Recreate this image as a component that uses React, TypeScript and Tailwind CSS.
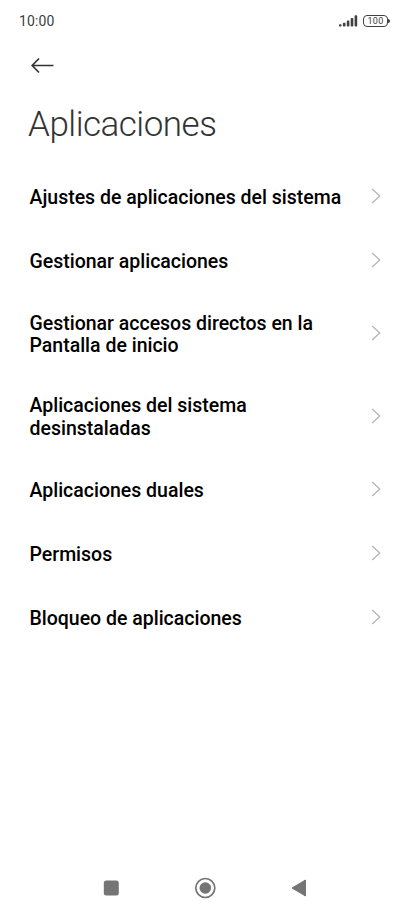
import React from 'react';

const items = [
  { label: 'Ajustes de aplicaciones del sistema', height: 'h-[64px]' },
  { label: 'Gestionar aplicaciones', height: 'h-[64px]' },
  {
    label: 'Gestionar accesos directos en la Pantalla de inicio',
    height: 'h-[82.5px]',
  },
  { label: 'Aplicaciones del sistema desinstaladas', height: 'h-[82.5px]' },
  { label: 'Aplicaciones duales', height: 'h-[64px]' },
  { label: 'Permisos', height: 'h-[64px]' },
  { label: 'Bloqueo de aplicaciones', height: 'h-[64px]' },
];

const StatusBar = () => {
  return (
    <div className="flex h-[42px] items-center justify-between pl-[19px] pr-[21px] text-[#404040]">
      <span className="text-[14px] font-[450] tracking-[0.1px]">10:00</span>
      <div className="flex items-center gap-[5px]">
        <svg width="19" height="12" viewBox="0 0 19 12" fill="currentColor">
          <rect x="0" y="9.2" width="2.6" height="2.4" rx="0.8" />
          <rect x="3.9" y="7.8" width="2.6" height="3.8" rx="0.8" />
          <rect x="7.8" y="5.6" width="2.6" height="6" rx="0.8" />
          <rect x="11.7" y="3" width="2.6" height="8.6" rx="0.8" />
          <rect x="15.6" y="0.2" width="2.6" height="11.4" rx="0.8" />
        </svg>
        <div className="flex items-center">
          <div className="flex h-[12px] w-[25px] items-center justify-center rounded-[4px] border border-[#404040] text-[9px] leading-none tracking-[0.2px]">
            100
          </div>
          <div className="h-[4px] w-[2px] rounded-r-full bg-[#404040]" />
        </div>
      </div>
    </div>
  );
};

const NavBar = () => {
  return (
    <div className="flex h-[52px] items-center justify-center pr-[1px] text-[#757575]">
      <svg width="206" height="24" viewBox="0 0 206 24" fill="currentColor">
        <rect x="1.8" y="4.5" width="15" height="15" rx="2.5" />
        <circle cx="103.3" cy="12" r="9.5" fill="none" stroke="currentColor" strokeWidth="1.7" />
        <circle cx="103.3" cy="12" r="5.8" />
        <path
          d="M190 12 L203.5 4 V20 Z"
          stroke="currentColor"
          strokeWidth="1"
          strokeLinejoin="round"
        />
      </svg>
    </div>
  );
};

const App = () => {
  return (
    <div className="flex h-[914px] w-[411px] flex-col bg-white font-[Roboto,sans-serif]">
      <StatusBar />
      <div className="flex h-[48px] items-center pl-[30px]">
        <svg width="24" height="18" viewBox="0 0 24 18" fill="none" stroke="#333" strokeWidth="1.7">
          <path d="M9 1.5 L2.2 8.5 L9 15.5 M2.2 8.5 H23.5" />
        </svg>
      </div>
      <h1 className="h-[75px] pt-[14px] pl-[28px] text-[35px] leading-[42px] font-light tracking-[-0.5px] text-[#333]">
        Aplicaciones
      </h1>
      <ul>
        {items.map(({ label, height }) => (
          <li
            key={label}
            className={`flex items-center justify-between pr-[30px] pl-[29.5px] ${height}`}
          >
            <span className="w-[320px] pt-[1.5px] text-[19.5px] leading-[22.3px] font-medium tracking-[-0.01px] text-black">
              {label}
            </span>
            <svg
              className="mb-[2px]"
              width="10"
              height="16"
              viewBox="0 0 10 16"
              fill="none"
              stroke="#b5b5b5"
              strokeWidth="1.3"
            >
              <path d="M1.2 1 L8.7 8 L1.2 15" />
            </svg>
          </li>
        ))}
      </ul>
      <div className="flex-1" />
      <NavBar />
    </div>
  );
};

export default App;
